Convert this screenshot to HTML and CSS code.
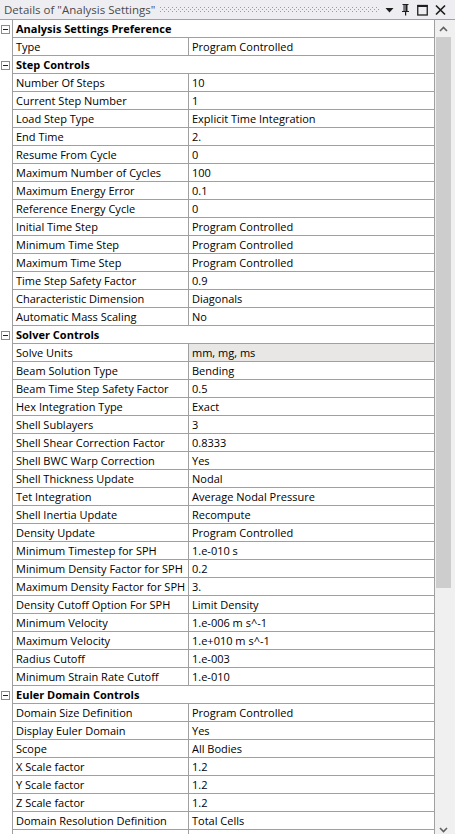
FILE: index.html
```html
<!DOCTYPE html>
<html>
<head>
<meta charset="utf-8">
<link rel="stylesheet" href="styles.css">
</head>
<body>
<div class="panel">
  <div class="titlebar">
    <span class="title">Details of "Analysis Settings"</span>
    <svg class="grip" height="6" preserveAspectRatio="none">
      <defs>
        <pattern id="dots" width="4" height="4" patternUnits="userSpaceOnUse">
          <rect x="0" y="0" width="1" height="1" fill="#9a9aa6"/>
          <rect x="2" y="2" width="1" height="1" fill="#9a9aa6"/>
        </pattern>
      </defs>
      <rect x="0" y="0" width="100%" height="5" fill="url(#dots)"/>
    </svg>
    <div class="tools">
      <svg width="9" height="10" viewBox="0 0 9 10"><path d="M0.5 3 L8.5 3 L4.5 7.5 Z" fill="#1e1e1e"/></svg>
      <svg width="9" height="13" viewBox="0 0 9 13"><path d="M1.5 1 H7.5 V2 H6.5 V8 H8 V9 H1 V8 H2.5 V2 H1.5 Z M3.6 2 V8 H4.4 V2 Z" fill="#1e1e1e"/><rect x="4" y="9" width="1.2" height="3.5" fill="#1e1e1e"/></svg>
      <svg width="11" height="12" viewBox="0 0 11 12"><rect x="0.75" y="1.5" width="9.5" height="9.5" fill="none" stroke="#1e1e1e" stroke-width="1.3"/><rect x="0.5" y="1" width="10" height="2" fill="#1e1e1e"/></svg>
      <svg width="11" height="12" viewBox="0 0 11 12"><path d="M1 1.5 L10 10.5 M10 1.5 L1 10.5" stroke="#1e1e1e" stroke-width="1.7"/></svg>
    </div>
  </div>
  <div class="body">
    <div class="grid" id="grid"></div>
    <div class="scrollbar">
      <div class="sbtn"><svg width="9" height="6" viewBox="0 0 9 6"><path d="M1 5 L4.5 1.5 L8 5" fill="none" stroke="#606060" stroke-width="1.6"/></svg></div>
      <div class="track"><div class="thumb"></div></div>
      <div class="sbtn"><svg width="9" height="6" viewBox="0 0 9 6"><path d="M1 1 L4.5 4.5 L8 1" fill="none" stroke="#606060" stroke-width="1.6"/></svg></div>
    </div>
  </div>
</div>
<script src="app.js"></script>
</body>
</html>
```

FILE: app.js
```js
const rows = [
  ["H","Analysis Settings Preference"],
  ["Type","Program Controlled"],
  ["H","Step Controls"],
  ["Number Of Steps","10"],
  ["Current Step Number","1"],
  ["Load Step Type","Explicit Time Integration"],
  ["End Time","2."],
  ["Resume From Cycle","0"],
  ["Maximum Number of Cycles","100"],
  ["Maximum Energy Error","0.1"],
  ["Reference Energy Cycle","0"],
  ["Initial Time Step","Program Controlled"],
  ["Minimum Time Step","Program Controlled"],
  ["Maximum Time Step","Program Controlled"],
  ["Time Step Safety Factor","0.9"],
  ["Characteristic Dimension","Diagonals"],
  ["Automatic Mass Scaling","No"],
  ["H","Solver Controls"],
  ["Solve Units","mm, mg, ms","ro"],
  ["Beam Solution Type","Bending"],
  ["Beam Time Step Safety Factor","0.5"],
  ["Hex Integration Type","Exact"],
  ["Shell Sublayers","3"],
  ["Shell Shear Correction Factor","0.8333"],
  ["Shell BWC Warp Correction","Yes"],
  ["Shell Thickness Update","Nodal"],
  ["Tet Integration","Average Nodal Pressure"],
  ["Shell Inertia Update","Recompute"],
  ["Density Update","Program Controlled"],
  ["Minimum Timestep for SPH","1.e-010 s"],
  ["Minimum Density Factor for SPH","0.2"],
  ["Maximum Density Factor for SPH","3."],
  ["Density Cutoff Option For SPH","Limit Density"],
  ["Minimum Velocity","1.e-006 m s^-1"],
  ["Maximum Velocity","1.e+010 m s^-1"],
  ["Radius Cutoff","1.e-003"],
  ["Minimum Strain Rate Cutoff","1.e-010"],
  ["H","Euler Domain Controls"],
  ["Domain Size Definition","Program Controlled"],
  ["Display Euler Domain","Yes"],
  ["Scope","All Bodies"],
  ["X Scale factor","1.2"],
  ["Y Scale factor","1.2"],
  ["Z Scale factor","1.2"],
  ["Domain Resolution Definition","Total Cells"],
  ["",""]
];
const grid = document.getElementById("grid");
const exp = '<svg width="9" height="9" viewBox="0 0 9 9"><rect x="0.5" y="0.5" width="8" height="8" fill="#fff" stroke="#8c8c8c"/><rect x="2" y="4" width="5" height="1" fill="#1e1e1e"/></svg>';
for (const r of rows) {
  const row = document.createElement("div");
  if (r[0] === "H") {
    row.className = "row group";
    row.innerHTML = '<div class="gutter">' + exp + '</div><div class="cells"><div class="head">' + r[1] + '</div></div>';
  } else {
    row.className = "row";
    row.innerHTML = '<div class="gutter"></div><div class="cells"><div class="label">' + r[0] + '</div><div class="value' + (r[2] ? ' ro' : '') + '">' + r[1] + '</div></div>';
  }
  grid.appendChild(row);
}
```

FILE: styles.css
```css
html, body {
  margin: 0;
  padding: 0;
  background: #ffffff;
  overflow: hidden;
}
.panel {
  width: 455px;
  height: 838px;
  font-family: "Open Sans", "Noto Sans", sans-serif;
  font-size: 11px;
  color: #000;
  display: flex;
  flex-direction: column;
}
.titlebar {
  height: 19px;
  background: #eeeef2;
  display: flex;
  align-items: center;
  padding-left: 4px;
  box-sizing: border-box;
}
.title {
  color: #4a4a4a;
  font-size: 11.5px;
  white-space: nowrap;
}
.grip {
  flex: 1;
  margin-left: 5px;
  margin-right: 5px;
  margin-top: 1px;
}
.tools {
  display: flex;
  align-items: center;
  gap: 7px;
  padding-right: 9px;
}
.body {
  flex: 1;
  display: flex;
  min-height: 0;
  border-top: 1px solid #a0a0a0;
}
.grid {
  width: 435px;
  display: flex;
  flex-direction: column;
  overflow: hidden;
}
.row {
  display: flex;
  height: 18px;
  flex: none;
}
.gutter {
  width: 12px;
  display: flex;
  align-items: center;
  padding-left: 1px;
  box-sizing: border-box;
}
.cells {
  width: 423px;
  display: flex;
  border-left: 1px solid #a0a0a0;
  border-right: 1px solid #a0a0a0;
  border-bottom: 1px solid #a0a0a0;
  box-sizing: border-box;
}
.label {
  width: 176px;
  border-right: 1px solid #a0a0a0;
  padding-left: 3px;
  box-sizing: border-box;
  line-height: 17px;
  white-space: nowrap;
  overflow: hidden;
}
.value {
  flex: 1;
  padding-left: 3px;
  line-height: 17px;
  white-space: nowrap;
}
.value.ro {
  background: #e8e7e5;
}
.head {
  padding-left: 3px;
  font-weight: bold;
  line-height: 17px;
}
.scrollbar {
  width: 20px;
  background: #f0f0f0;
  display: flex;
  flex-direction: column;
}
.sbtn {
  height: 17px;
  display: flex;
  align-items: center;
  justify-content: center;
  padding-right: 3px;
}
.track {
  flex: 1;
  padding-left: 1px;
}
.thumb {
  width: 15px;
  height: 551px;
  background: #cdcdcd;
}
```
